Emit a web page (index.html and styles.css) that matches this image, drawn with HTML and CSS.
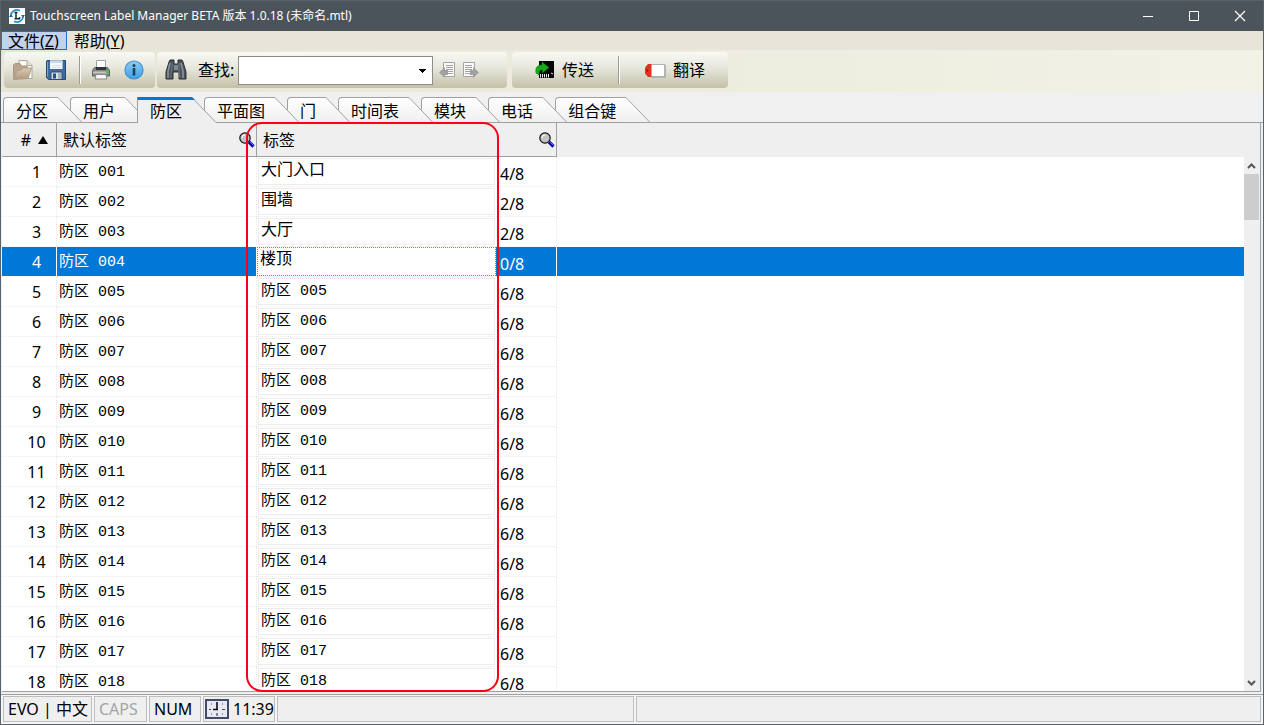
FILE: index.html
```html
<!DOCTYPE html>
<html lang="zh-CN">
<head>
<meta charset="utf-8">
<title>Touchscreen Label Manager BETA</title>
<link rel="stylesheet" href="styles.css">
</head>
<body>
<svg class="defs" width="0" height="0" aria-hidden="true">
  <defs>
    <linearGradient id="tabfill" x1="0" y1="0" x2="0" y2="1"><stop offset="0" stop-color="#fff"/><stop offset="1" stop-color="#efefef"/></linearGradient>
    <linearGradient id="folder" x1="0" y1="0" x2="0" y2="1"><stop offset="0" stop-color="#dcc8b4"/><stop offset="1" stop-color="#ae9880"/></linearGradient>
    <linearGradient id="infofill" x1="0" y1="0" x2="0" y2="1"><stop offset="0" stop-color="#8dccf3"/><stop offset="1" stop-color="#3fa0e4"/></linearGradient>
    <symbol id="slant" viewBox="0 0 25 26"><path d="M0 0H1L25 25V26H0Z" fill="url(#tabfill)"/><path d="M0 .5H1L25 25.500H0" fill="none" stroke="#a0a0a0"/></symbol>
    <symbol id="slant-on" viewBox="0 0 25 26"><path d="M0 0H1L25 25V26H0Z" fill="#efefef"/><path d="M1 .5L25 25.500" fill="none" stroke="#a0a0a0"/><path d="M0 0H1L4 3H0Z" fill="#0078d7"/></symbol>
    <symbol id="lens" viewBox="0 0 16 16"><path d="M10 10l4.500 4.500" stroke="#0000b0" stroke-width="3.200"/><path d="M10.500 9.500l4 4" stroke="#5a6cff" stroke-width="1"/><circle cx="6" cy="6" r="5.200" fill="#c4c4c4" stroke="#111" stroke-width="1.200"/><path d="M3 6a3 3 0 0 1 3-3" fill="none" stroke="#fff"/></symbol>
  </defs>
</svg>
<div class="window">
  <header class="titlebar">
    <svg class="logo" width="16" height="16" viewBox="0 0 16 16"><path d="M0 0h16v16H0z" fill="#fff"/><path d="M2 9A6 6 0 0 1 11 2.800" fill="none" stroke="#2193cf" stroke-width="1.700"/><path d="M14 7A6 6 0 0 1 5 13.200" fill="none" stroke="#2193cf" stroke-width="1.700"/><path d="M12 7l1.800 3L16 7zM0 9l2-3 2 3z" fill="#1b6fa8"/><path d="M5.500 4.500h3M7 4.500v6M5.500 10.700h5V9" fill="none" stroke="#152a3c" stroke-width="1.500"/></svg>
    <h1 class="title">Touchscreen Label Manager BETA 版本 1.0.18 (未命名.mtl)</h1>
    <div class="controls">
      <button class="control" aria-label="最小化"><svg width="12" height="12" viewBox="0 0 12 12"><path d="M1 6.500h10" stroke="#fff"/></svg></button>
      <button class="control" aria-label="最大化"><svg width="12" height="12" viewBox="0 0 12 12"><path d="M1.500 1.500h9v9h-9z" fill="none" stroke="#fff"/></svg></button>
      <button class="control" aria-label="关闭"><svg width="12" height="12" viewBox="0 0 12 12"><path d="M1 1l10 10M11 1L1 11" stroke="#fff" stroke-width="1.200"/></svg></button>
    </div>
  </header>

  <nav class="menubar">
    <button class="menu menu-on">文件(<u>Z</u>)</button>
    <button class="menu">帮助(<u>Y</u>)</button>
  </nav>

  <div class="toolbar">
    <div class="group group-file">
      <button class="tool" aria-label="打开"><svg width="22" height="22" viewBox="0 0 22 22"><path d="M7 1.500h8l5 5v13H7z" fill="#fbfbf8" stroke="#aaa79d"/><path d="M15 1.500v5h5" fill="#e5e3da" stroke="#aaa79d"/><path d="M1.500 19V6l1.500-1.500h5L9.500 7H15v12z" fill="#b9a48e" stroke="#a8957f"/><path d="M1.500 20.500L5 11.500l4-.5 2-2h8.500L16 19.500z" fill="url(#folder)" stroke="#b09c86"/></svg></button>
      <button class="tool" aria-label="保存"><svg width="22" height="22" viewBox="0 0 22 22"><path d="M2 1.500h18.500v19H3.500L1.500 18.500V2z" fill="#416a9f" stroke="#244872"/><path d="M2.500 2.500v15" stroke="#7ba0cc"/><path d="M5 1.500h12.500V10H5z" fill="#f4f8fc"/><path d="M5 1.500h12.500v2.500H5z" fill="#c8d9ea"/><path d="M7 6.500h9M7 8.500h9" stroke="#d8e1ea"/><path d="M6 13h11v7.500H6z" fill="#dce1e5" stroke="#2b4d76"/><path d="M8 14.500h3v5H8z" fill="#274f80"/><path d="M13 14h3v6h-3z" fill="#aab5bf"/></svg></button>
      <span class="divider"></span>
      <button class="tool" aria-label="打印"><svg width="22" height="22" viewBox="0 0 22 22"><path d="M6.500 1.500h9V10h-9z" fill="#fcfcfc" stroke="#a0a0a0"/><path d="M4.500 8.500h13l2 3v5.500h-17v-5.500z" fill="#858585" stroke="#606060"/><path d="M6 8h10v3H6z" fill="#333"/><path d="M3 12.500h16v2H3z" fill="#c5c5c5"/><path d="M16 12.500h3v2h-3z" fill="#38cb2d"/><path d="M6 15.500h10l1 4.500H5z" fill="#f7f7f7" stroke="#888"/></svg></button>
      <button class="tool" aria-label="信息"><svg width="22" height="22" viewBox="0 0 22 22"><circle cx="11" cy="11" r="9" fill="url(#infofill)" stroke="#3f8fd2" stroke-width="1.200"/><circle cx="11" cy="6.500" r="1.500" fill="#233f59"/><path d="M11 9v7.500" stroke="#233f59" stroke-width="2.600"/></svg></button>
    </div>
    <div class="group group-search">
      <button class="tool" aria-label="查找"><svg width="22" height="22" viewBox="0 0 22 22"><path d="M4 3l1-2h4v4h4V1h4l1 2 3 10v7h-7v-7H8v7H1v-7z" fill="#4a525b" stroke="#272c31"/><path d="M5 4L3 12.500V19M16 4l2 8.500V19" fill="none" stroke="#8c959f" stroke-width="1.600"/><path d="M7.500 4L6 13v6M14 4v9l1 6" fill="none" stroke="#6f7881"/><path d="M9 6h4v5H9z" fill="#80888f"/></svg></button>
      <label class="search-label" for="search">查找:</label>
      <select class="search" id="search"><option></option></select>
      <button class="tool nav-tool" aria-label="上一个"><svg width="18" height="18" viewBox="0 0 18 18"><path d="M5.500 1.500h11v14h-11z" fill="#fbfbf8" stroke="#a3a3a3"/><path d="M8 4.500h7M8 6.500h7M8 8.500h7M8 10.500h7M8 12.500h7" stroke="#a3a3a3"/><path d="M1 11.500L7 6v3h3v5H7v3z" fill="#a0a0a0"/></svg></button>
      <button class="tool nav-tool" aria-label="下一个"><svg width="18" height="18" viewBox="0 0 18 18"><path d="M1.500 1.500h11v14h-11z" fill="#fbfbf8" stroke="#a3a3a3"/><path d="M3 4.500h7M3 6.500h7M3 8.500h7M3 10.500h7M3 12.500h7" stroke="#a3a3a3"/><path d="M17 11.500L11 6v3H8v5h3v3z" fill="#a0a0a0"/></svg></button>
    </div>
    <div class="group group-send">
      <button class="tool text-tool"><svg width="20" height="20" viewBox="0 0 20 20"><path d="M4 1h15v17H4z" fill="#050505"/><path d="M5.500 14v3.500M7.500 14v3.500M9.500 14v3.500M11.500 14v3.500M13.500 14v3.500M16 13l2 1" stroke="#eee"/><path d="M1 13C0 7 3 5 7 5V2l7 5.500L7.500 13v-3C4 10 4 12 4 15z" fill="#14ad14" stroke="#087808" stroke-width=".6"/></svg>传送</button>
      <span class="divider"></span>
      <button class="tool text-tool"><svg width="22" height="16" viewBox="0 0 22 16"><path d="M6 2.500h15v12H6z" fill="#fff" stroke="#b4b4ae"/><path d="M21 3v12H7" fill="none" stroke="#aaa" stroke-width="1.500"/><path d="M4 2h3.500v13H4L1 11.500v-6z" fill="#e4301f"/><path d="M3.500 7v3M2.500 8.500h2" stroke="#9a1c13"/></svg>翻译</button>
    </div>
  </div>

  <nav class="tabs" role="tablist">
    <button class="tab" role="tab"><span class="tab-text">分区</span><svg class="tab-end"><use href="#slant"/></svg></button>
    <button class="tab" role="tab"><span class="tab-text">用户</span><svg class="tab-end"><use href="#slant"/></svg></button>
    <button class="tab tab-on" role="tab" aria-selected="true"><span class="tab-text">防区</span><svg class="tab-end"><use href="#slant-on"/></svg></button>
    <button class="tab" role="tab"><span class="tab-text">平面图</span><svg class="tab-end"><use href="#slant"/></svg></button>
    <button class="tab" role="tab"><span class="tab-text">门</span><svg class="tab-end"><use href="#slant"/></svg></button>
    <button class="tab" role="tab"><span class="tab-text">时间表</span><svg class="tab-end"><use href="#slant"/></svg></button>
    <button class="tab" role="tab"><span class="tab-text">模块</span><svg class="tab-end"><use href="#slant"/></svg></button>
    <button class="tab" role="tab"><span class="tab-text">电话</span><svg class="tab-end"><use href="#slant"/></svg></button>
    <button class="tab" role="tab"><span class="tab-text">组合键</span><svg class="tab-end"><use href="#slant"/></svg></button>
  </nav>

  <main class="panel">
    <div class="sheet">
      <table class="zones">
        <colgroup><col class="c-num"><col class="c-default"><col class="c-label"><col class="c-count"><col></colgroup>
        <thead>
          <tr>
            <th class="th-num"><div class="head head-num">#<svg width="10" height="10" viewBox="0 0 10 10"><path d="M5 1l5 8H0z" fill="#000"/></svg></div></th>
            <th><div class="head">默认标签<svg width="16" height="16"><use href="#lens"/></svg></div></th>
            <th colspan="2"><div class="head">标签<svg width="16" height="16"><use href="#lens"/></svg></div></th>
            <th class="rest"></th>
          </tr>
        </thead>
        <tbody>
          <tr><td class="num">1</td><td class="name">防区 001</td><td class="edit"><input class="field field-han" aria-label="标签 1" value="大门入口"></td><td class="count">4/8</td><td class="rest"></td></tr>
          <tr><td class="num">2</td><td class="name">防区 002</td><td class="edit"><input class="field field-han" aria-label="标签 2" value="围墙"></td><td class="count">2/8</td><td class="rest"></td></tr>
          <tr><td class="num">3</td><td class="name">防区 003</td><td class="edit"><input class="field field-han" aria-label="标签 3" value="大厅"></td><td class="count">2/8</td><td class="rest"></td></tr>
          <tr class="selected"><td class="num">4</td><td class="name">防区 004</td><td class="edit"><input class="field field-han" aria-label="标签 4" value="楼顶"></td><td class="count">0/8</td><td class="rest"></td></tr>
          <tr><td class="num">5</td><td class="name">防区 005</td><td class="edit"><input class="field" aria-label="标签 5" value="防区 005"></td><td class="count">6/8</td><td class="rest"></td></tr>
          <tr><td class="num">6</td><td class="name">防区 006</td><td class="edit"><input class="field" aria-label="标签 6" value="防区 006"></td><td class="count">6/8</td><td class="rest"></td></tr>
          <tr><td class="num">7</td><td class="name">防区 007</td><td class="edit"><input class="field" aria-label="标签 7" value="防区 007"></td><td class="count">6/8</td><td class="rest"></td></tr>
          <tr><td class="num">8</td><td class="name">防区 008</td><td class="edit"><input class="field" aria-label="标签 8" value="防区 008"></td><td class="count">6/8</td><td class="rest"></td></tr>
          <tr><td class="num">9</td><td class="name">防区 009</td><td class="edit"><input class="field" aria-label="标签 9" value="防区 009"></td><td class="count">6/8</td><td class="rest"></td></tr>
          <tr><td class="num">10</td><td class="name">防区 010</td><td class="edit"><input class="field" aria-label="标签 10" value="防区 010"></td><td class="count">6/8</td><td class="rest"></td></tr>
          <tr><td class="num">11</td><td class="name">防区 011</td><td class="edit"><input class="field" aria-label="标签 11" value="防区 011"></td><td class="count">6/8</td><td class="rest"></td></tr>
          <tr><td class="num">12</td><td class="name">防区 012</td><td class="edit"><input class="field" aria-label="标签 12" value="防区 012"></td><td class="count">6/8</td><td class="rest"></td></tr>
          <tr><td class="num">13</td><td class="name">防区 013</td><td class="edit"><input class="field" aria-label="标签 13" value="防区 013"></td><td class="count">6/8</td><td class="rest"></td></tr>
          <tr><td class="num">14</td><td class="name">防区 014</td><td class="edit"><input class="field" aria-label="标签 14" value="防区 014"></td><td class="count">6/8</td><td class="rest"></td></tr>
          <tr><td class="num">15</td><td class="name">防区 015</td><td class="edit"><input class="field" aria-label="标签 15" value="防区 015"></td><td class="count">6/8</td><td class="rest"></td></tr>
          <tr><td class="num">16</td><td class="name">防区 016</td><td class="edit"><input class="field" aria-label="标签 16" value="防区 016"></td><td class="count">6/8</td><td class="rest"></td></tr>
          <tr><td class="num">17</td><td class="name">防区 017</td><td class="edit"><input class="field" aria-label="标签 17" value="防区 017"></td><td class="count">6/8</td><td class="rest"></td></tr>
          <tr><td class="num">18</td><td class="name">防区 018</td><td class="edit"><input class="field" aria-label="标签 18" value="防区 018"></td><td class="count">6/8</td><td class="rest"></td></tr>
        </tbody>
      </table>
    </div>
    <div class="scrollbar">
      <svg class="arrow" width="15" height="17" viewBox="0 0 15 17"><path d="M4 11l3.500-3.500L11 11" fill="none" stroke="#555" stroke-width="2"/></svg>
      <div class="thumb"></div>
      <svg class="arrow arrow-down" width="15" height="17" viewBox="0 0 15 17"><path d="M4 7l3.500 3.500L11 7" fill="none" stroke="#555" stroke-width="2"/></svg>
    </div>
    <div class="highlight"></div>
  </main>

  <footer class="status">
    <span class="cell cell-lang">EVO | 中文</span>
    <span class="cell cell-caps">CAPS</span>
    <span class="cell cell-num">NUM</span>
    <span class="cell cell-time"><svg width="24" height="20" viewBox="0 0 24 20"><path d="M1 1h22v18H1z" fill="#e8e9f5" stroke="#414a66" stroke-width="2"/><path d="M12 3v8M8 10.500h5" stroke="#111" stroke-width="1.600"/><path d="M12 14v3M4 10.500h2M17 10.500h3M6 5h1M17 5h1M6 15h1M17 15h1" stroke="#444" stroke-width="1.200"/></svg>11:39</span>
    <span class="cell cell-mid"></span>
    <span class="cell cell-wide"></span>
  </footer>
</div>
</body>
</html>
```
FILE: styles.css
```css
* { box-sizing: border-box; }
body {
  margin: 0;
  font: 16px/20px "Noto Sans", "Noto Sans CJK SC", sans-serif;
  color: #000;
}
.defs { position: absolute; }
svg { flex: none; }
button {
  margin: 0;
  padding: 0;
  border: 0;
  background: none;
  font: inherit;
  color: inherit;
}
.window {
  display: flex;
  flex-direction: column;
  height: 100vh;
  overflow: hidden;
  border: 1px solid #596268;
  background: #f0f0f0;
}

/* Title bar */
.titlebar {
  display: flex;
  align-items: center;
  flex: none;
  height: 30px;
  padding-left: 8px;
  background: #4c545b;
  color: #fff;
}
.title { margin: 0 0 0 5px; font-size: 12px; font-weight: 400; }
.controls { display: flex; margin-left: auto; }
.control { display: flex; align-items: center; justify-content: center; width: 46px; height: 30px; }

/* Menu */
.menubar { display: flex; flex: none; height: 19px; background: #e7e5d9; }
.menu { height: 19px; padding: 1px 7px 0 6px; border: 1px solid transparent; line-height: 16px; }
.menu-on { border-color: #316ac5; background: #c1d2ee; }

/* Toolbar */
.toolbar {
  display: flex;
  flex: none;
  height: 42px;
  padding: 2px 3px 4px;
  background: linear-gradient(90deg, #e7e5d5, #f2f2e6);
}
.group {
  display: flex;
  align-items: center;
  border-radius: 4px;
  background: linear-gradient(#f9f9f5, #e6e6dc 45%, #c3c1a8);
}
.tool { display: flex; align-items: center; }
.divider { width: 2px; height: 28px; border-left: 1px solid #9c9c92; border-right: 1px solid #fff; }
.group-file { gap: 11px; width: 151px; padding-left: 8px; margin-right: 2px; }
.group-file .divider { margin: 0 -2px 0 1px; }
.group-search { width: 350px; padding-left: 8px; margin-right: 5px; }
.group-send { gap: 24px; width: 216px; padding-left: 23px; }
.text-tool { gap: 7px; }
.search-label { margin: 0 4px 0 11px; }
.search {
  width: 195px;
  height: 29px;
  margin-right: 5px;
  border: 1px solid #8c8c8c;
  border-radius: 0;
  appearance: none;
  background: linear-gradient(#000, #000) right 6px top 12px / 7px 1px no-repeat,
    linear-gradient(#000, #000) right 7px top 13px / 5px 1px no-repeat,
    linear-gradient(#000, #000) right 8px top 14px / 3px 1px no-repeat,
    linear-gradient(#000, #000) right 9px top 15px / 1px 1px no-repeat,
    #fff;
  font: inherit;
}
.nav-tool { margin-right: 6px; }

/* Tabs */
.tabs {
  display: flex;
  align-items: flex-end;
  flex: none;
  height: 31px;
  padding-left: 2px;
  border-bottom: 1px solid #a0a0a0;
}
.tab { position: relative; display: flex; height: 26px; margin: 0 -12px -1px 0; z-index: 1; }
.tab:nth-child(1) { z-index: 9; }
.tab:nth-child(2) { z-index: 8; }
.tab:nth-child(4) { z-index: 7; }
.tab:nth-child(5) { z-index: 6; }
.tab:nth-child(6) { z-index: 5; }
.tab:nth-child(7) { z-index: 4; }
.tab:nth-child(8) { z-index: 3; }
.tab-text {
  height: 26px;
  padding: 3px 9px 0 12px;
  border: solid #a0a0a0;
  border-width: 1px 0 1px 1px;
  border-top-left-radius: 4px;
  background: linear-gradient(#fff, #efefef);
}
.tab-end { width: 25px; height: 26px; }
.tab.tab-on { z-index: 10; }
.tab-on .tab-text {
  padding-top: 1px;
  border-top: 3px solid #0078d7;
  border-bottom: 0;
  border-top-left-radius: 1px;
  background: #efefef;
}

/* Grid */
.panel {
  position: relative;
  display: flex;
  flex: 1;
  min-height: 0;
  margin: 0 2px 2px 1px;
  border-right: 1px solid #a0a0a0;
  border-bottom: 1px solid #a0a0a0;
  background: #efefef;
}
.sheet { flex: 1; min-width: 0; overflow: hidden; }
.zones { width: 100%; border-spacing: 0; table-layout: fixed; background: #fff; }
.c-num { width: 55px; }
.c-default { width: 200px; }
.c-label { width: 240px; }
.c-count { width: 60px; }
th {
  height: 34px;
  padding: 0 1px 0 6px;
  border: solid #a0a0a0;
  border-width: 0 1px 1px 0;
  background: #efefef;
  font-weight: 400;
}
.head { display: flex; align-items: center; justify-content: space-between; }
.head-num { justify-content: flex-end; gap: 7px; padding-right: 7px; }
td {
  height: 30px;
  padding: 0;
  border: dotted #ebebeb;
  border-width: 0 1px 1px 0;
  background-clip: padding-box;
  line-height: 20px;
}
th.rest, td.rest { border-width: 0; }
.num { padding-left: 15px; text-align: center; }
.name { padding: 2px 0 0 2px; font: 15px/20px "Liberation Mono", "Noto Sans CJK SC", monospace; }
td.edit { border-right: 0; padding: 0 0 0 1px; vertical-align: middle; }
.field {
  display: block;
  width: 237px;
  height: 27px;
  padding: 0 2px 5px 2px;
  border: 1px solid #ececec;
  border-radius: 0;
  outline: 0;
  background: #fff;
  color: #000;
  font: 15px/20px "Liberation Mono", "Noto Sans CJK SC", monospace;
  line-height: 18px;
}
.field-han { padding-bottom: 7px; font-size: 16px; }
.count { padding: 4px 0 0 3px; }
.selected td { background-color: #0078d7; color: #fff; border-right: 1px solid #fff; }
.selected td.rest { border-bottom: 1px solid #fff; border-right: 0; }
.selected td.edit { padding: 0; border-right: 0; }
.selected .field { width: 239px; height: 29px; padding: 0 2px 9px 2px; border: 1px dotted #c66f35; }

.scrollbar { display: flex; flex-direction: column; width: 16px; padding: 34px 1px 0 0; }
.thumb { height: 46px; background: #cdcdcd; }
.arrow-down { margin-top: auto; }
.highlight {
  position: absolute;
  top: -1px;
  bottom: -1px;
  left: 244px;
  width: 253px;
  border: 2px solid #fa0014;
  border-radius: 16px;
  pointer-events: none;
  z-index: 11;
}

/* Status bar */
.status {
  display: flex;
  flex: none;
  gap: 2px;
  height: 30px;
  padding: 1px 2px 2px;
  border-top: 1px solid #a0a0a0;
  background: #f5f5f5;
}
.cell {
  display: flex;
  align-items: center;
  padding-left: 4px;
  border: 1px solid #bdbdbd;
  background: #efefef;
  white-space: nowrap;
}
.cell-lang { width: 89px; }
.cell-caps { width: 53px; color: #a5a5a5; }
.cell-num { width: 52px; }
.cell-time { width: 72px; gap: 4px; padding-left: 1px; }
.cell-mid { width: 357px; }
.cell-wide { flex: 1; }
```
